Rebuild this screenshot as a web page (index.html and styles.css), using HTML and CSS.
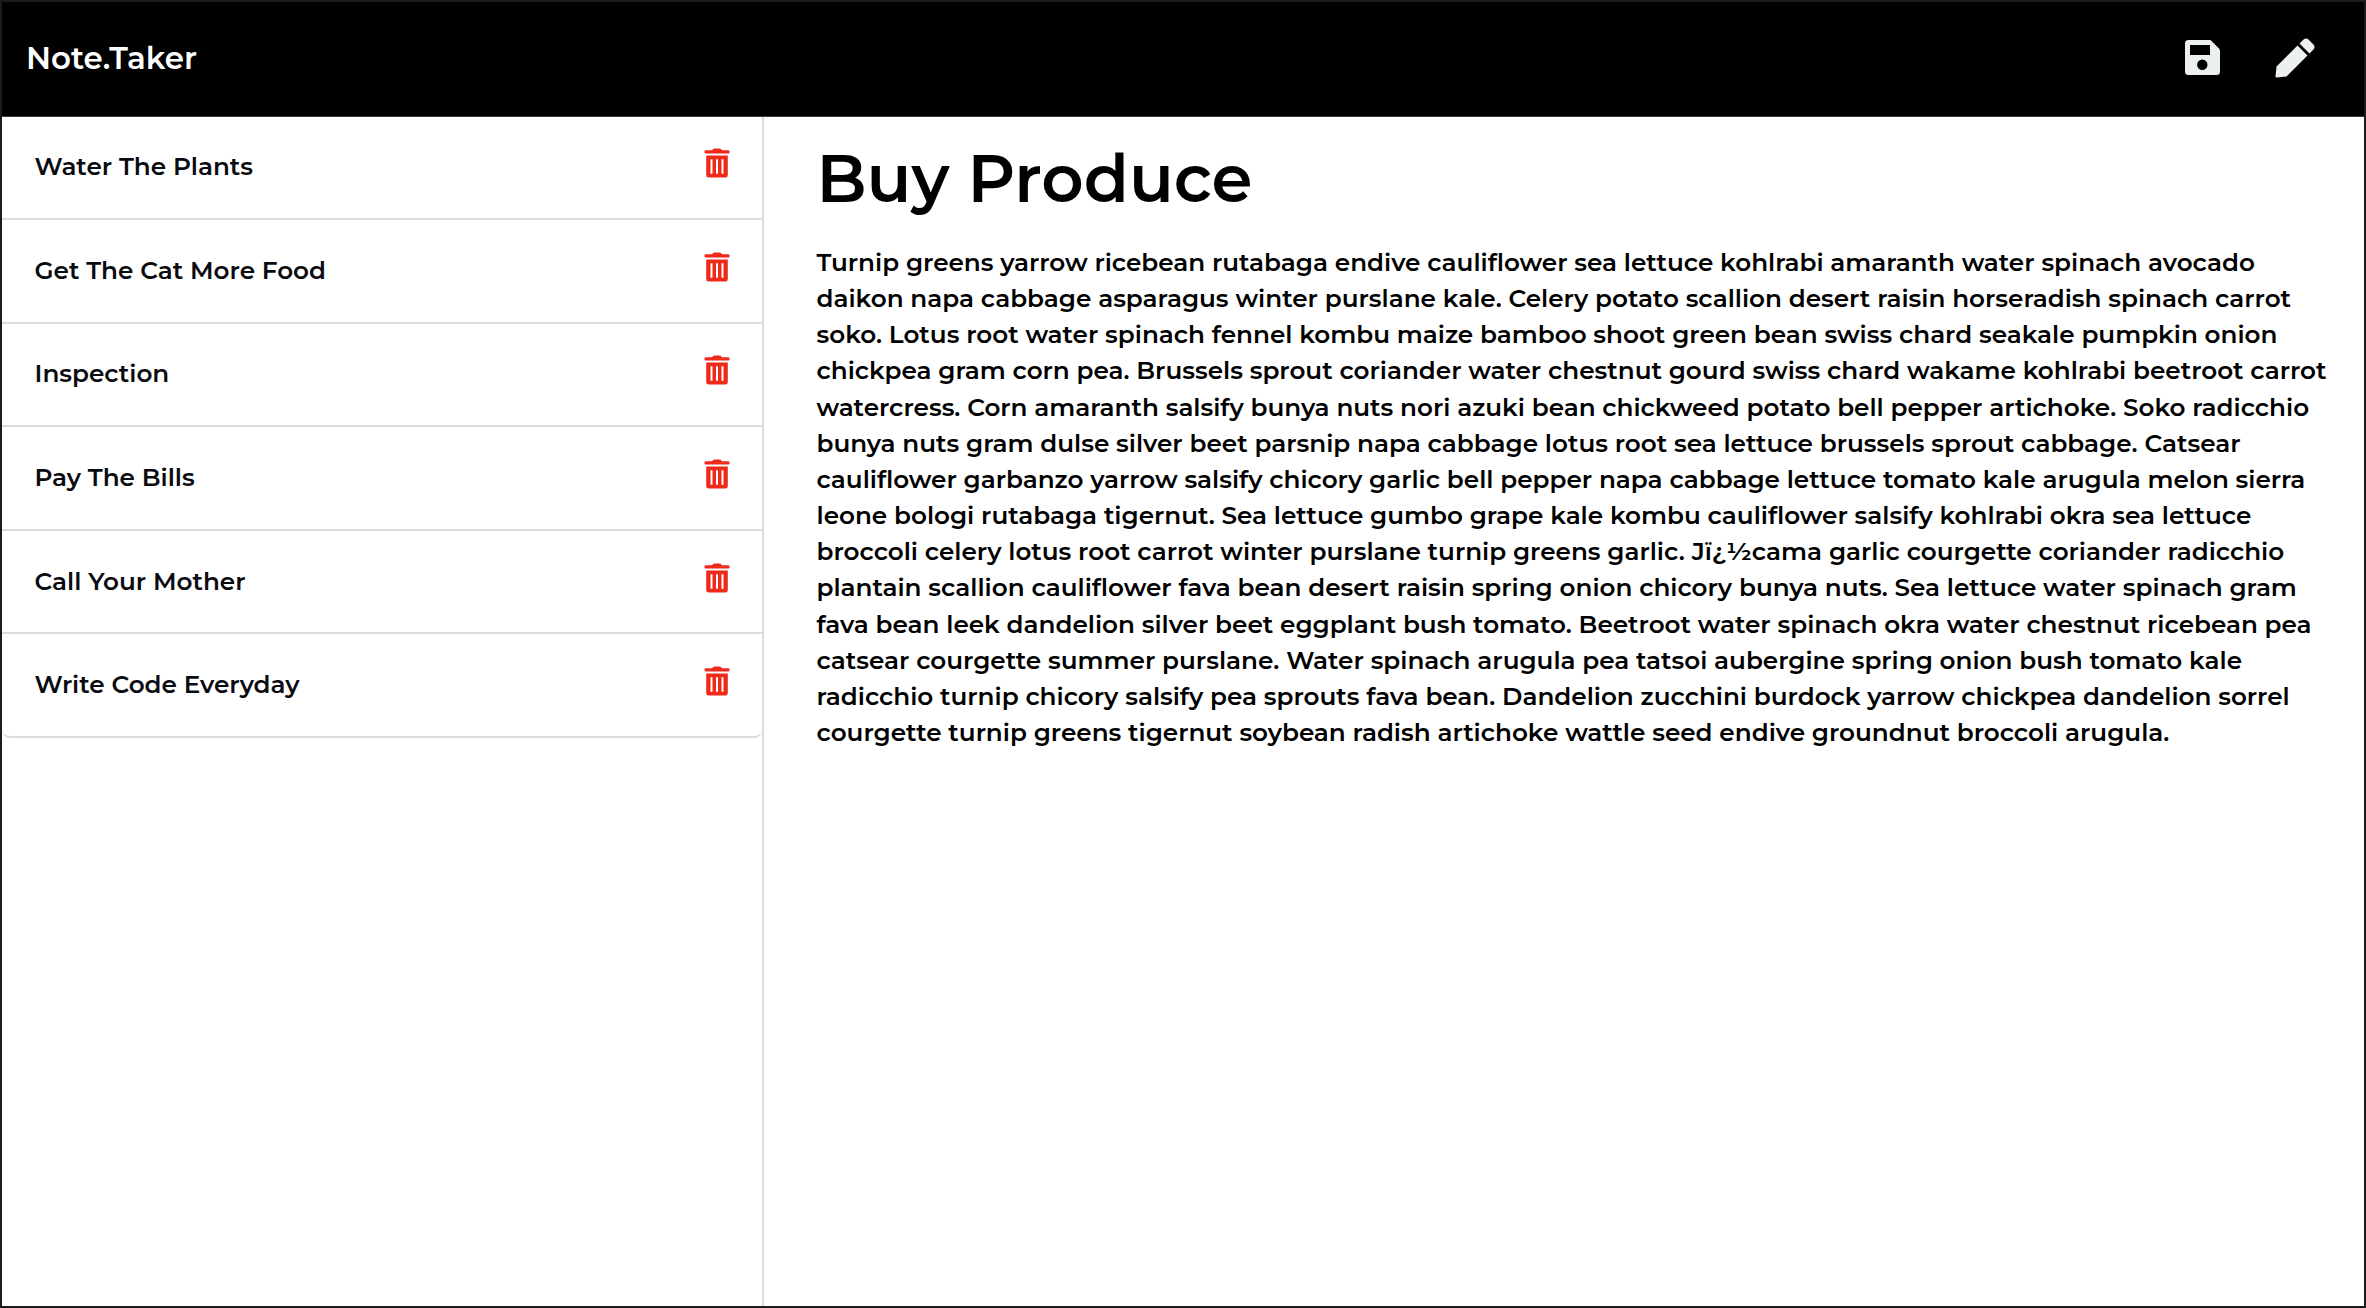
FILE: index.html
```html
<!DOCTYPE html>
<html lang="en">
<head>
<meta charset="utf-8">
<title>Note.Taker</title>
<link rel="stylesheet" href="styles.css">
</head>
<body>
<svg class="defs" aria-hidden="true">
  <symbol id="trash" viewBox="0 0 26 30">
    <path fill="#ee2a1b" fill-rule="evenodd" d="M1.5 2.2H8L9.5.8Q10 .4 11 .4H15Q16 .4 16.500 .8L18 2.200H24.500Q25.500 2.200 25.500 3.200V4.500Q25.500 5.500 24.500 5.500H1.500Q.5 5.500 .5 4.500V3.200Q.5 2.200 1.500 2.200ZM2.200 7.500H23.800V27Q23.800 29.500 21.500 29.500H4.500Q2.200 29.500 2.200 27ZM6.500 11.200V25.800H8.500V11.200ZM12 11.200V25.800H14V11.200ZM17.500 11.200V25.800H19.500V11.200Z"/>
  </symbol>
</svg>
<div class="window">
  <header class="navbar">
    <a class="brand">Note.Taker</a>
    <div class="actions">
      <svg class="save" viewBox="0 0 35 35"><path fill="#ecf0f1" fill-rule="evenodd" d="M3.500 0H25.500L34 8.500Q35 9.500 35 11.500V31.500Q35 35 31.500 35H3.500Q0 35 0 31.500V3.500Q0 0 3.500 0ZM5 5V15H25V5ZM17.300 19.600A5.200 5.200 0 1 0 17.300 30A5.200 5.200 0 1 0 17.300 19.600Z"/></svg>
      <svg class="pen" viewBox="0 0 40 40"><path fill="#ecf0f1" d="M22.500 7.500L32.500 17.500L11.500 38.500L1.500 39.500Q.3 39.500 .5 38.300L1.500 28.500ZM24.500 5.500L28.600 1.400Q31 -.6 33.500 1.400L38.500 6.500Q40.600 9 38.500 11.500L34.500 15.500Z"/></svg>
    </div>
  </header>
  <main class="content">
    <aside class="sidebar">
      <ul class="notes">
        <li class="note"><span class="name">Water The Plants</span><svg class="trash"><use href="#trash"/></svg></li>
        <li class="note"><span class="name">Get The Cat More Food</span><svg class="trash"><use href="#trash"/></svg></li>
        <li class="note"><span class="name">Inspection</span><svg class="trash"><use href="#trash"/></svg></li>
        <li class="note"><span class="name">Pay The Bills</span><svg class="trash"><use href="#trash"/></svg></li>
        <li class="note"><span class="name">Call Your Mother</span><svg class="trash"><use href="#trash"/></svg></li>
        <li class="note"><span class="name">Write Code Everyday</span><svg class="trash"><use href="#trash"/></svg></li>
      </ul>
    </aside>
    <article class="detail">
      <h1 class="title">Buy Produce</h1>
      <p class="text">
        Turnip greens yarrow ricebean rutabaga endive cauliflower sea lettuce kohlrabi amaranth water spinach avocado<br>
        daikon napa cabbage asparagus winter purslane kale. Celery potato scallion desert raisin horseradish spinach carrot<br>
        soko. Lotus root water spinach fennel kombu maize bamboo shoot green bean swiss chard seakale pumpkin onion<br>
        chickpea gram corn pea. Brussels sprout coriander water chestnut gourd swiss chard wakame kohlrabi beetroot carrot<br>
        watercress. Corn amaranth salsify bunya nuts nori azuki bean chickweed potato bell pepper artichoke. Soko radicchio<br>
        bunya nuts gram dulse silver beet parsnip napa cabbage lotus root sea lettuce brussels sprout cabbage. Catsear<br>
        cauliflower garbanzo yarrow salsify chicory garlic bell pepper napa cabbage lettuce tomato kale arugula melon sierra<br>
        leone bologi rutabaga tigernut. Sea lettuce gumbo grape kale kombu cauliflower salsify kohlrabi okra sea lettuce<br>
        broccoli celery lotus root carrot winter purslane turnip greens garlic. Jï¿½cama garlic courgette coriander radicchio<br>
        plantain scallion cauliflower fava bean desert raisin spring onion chicory bunya nuts. Sea lettuce water spinach gram<br>
        fava bean leek dandelion silver beet eggplant bush tomato. Beetroot water spinach okra water chestnut ricebean pea<br>
        catsear courgette summer purslane. Water spinach arugula pea tatsoi aubergine spring onion bush tomato kale<br>
        radicchio turnip chicory salsify pea sprouts fava bean. Dandelion zucchini burdock yarrow chickpea dandelion sorrel<br>
        courgette turnip greens tigernut soybean radish artichoke wattle seed endive groundnut broccoli arugula.
      </p>
    </article>
  </main>
</div>
</body>
</html>
```
FILE: styles.css
```css
* { box-sizing: border-box; }
body {
  margin: 0;
  font-family: Montserrat, Inter, "Open Sans", sans-serif;
  font-weight: 600;
  color: #000;
  background: #fff;
}
.defs { display: none; }
.window {
  height: 1308px;
  display: flex;
  flex-direction: column;
  border: 2px solid #1c1c1c;
  overflow: hidden;
}
.navbar {
  flex: none;
  height: 115px;
  padding: 0 49px 3px 24px;
  display: flex;
  align-items: center;
  justify-content: space-between;
  background: #000;
  border-bottom: 1px solid #3a3a3a;
}
.brand { font-size: 30.9px; color: #fff; }
.actions { display: flex; align-items: center; gap: 55px; }
.save { width: 35px; height: 35px; }
.pen { width: 40px; height: 40px; }
.content { flex: 1; display: flex; }
.sidebar { flex: none; width: 762px; border-right: 2px solid #dbdbdb; }
.notes { list-style: none; margin: -0.6px 0 0; padding: 0; }
.note {
  height: 103.6px;
  padding: 0 32px 2px 32.5px;
  display: flex;
  align-items: center;
  justify-content: space-between;
  font-size: 24.7px;
  color: #0a0b10;
  border-bottom: 2px solid #dbdbdb;
}
.note:last-child { border-radius: 0 0 8px 8px; }
.trash { width: 26px; height: 30px; margin-bottom: 6px; }
.detail { padding: 22px 0 0 52.5px; }
.title { margin: 0; font-size: 65.8px; line-height: 79px; font-weight: 600; }
.text { margin: 26px 0 0; font-size: 24.7px; line-height: 36.16px; white-space: nowrap; }
```
